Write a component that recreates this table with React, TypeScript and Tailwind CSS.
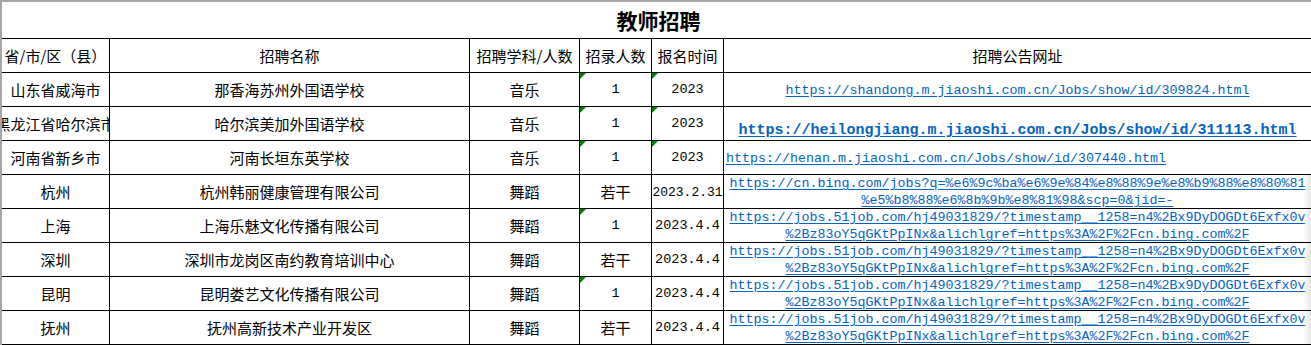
import React from "react";

const CJK = { fontFamily: '"Noto Sans CJK SC", "Liberation Sans", sans-serif' };
const MONO = { fontFamily: '"Liberation Mono", "Noto Sans CJK SC", monospace' };

function Tri() {
  return (
    <div className="absolute left-0 top-0 w-[6px] h-[6px] bg-[#008000] [clip-path:polygon(0_0,100%_0,0_100%)]" />
  );
}

function Cell({
  children,
  tri,
  mono,
  className = "",
}: {
  children: React.ReactNode;
  tri?: boolean;
  mono?: boolean;
  className?: string;
}) {
  return (
    <div
      className={`relative h-[34px] border-r border-b border-black overflow-hidden flex items-center justify-center whitespace-nowrap text-black ${className}`}
      style={mono ? MONO : CJK}
    >
      {tri && <Tri />}
      {children}
    </div>
  );
}

const J1 = "https://jobs.51job.com/hj49031829/?timestamp__1258=n4%2Bx9DyDOGDt6Exfx0v";
const J2 = "%2Bz83oY5qGKtPpINx&alichlgref=https%3A%2F%2Fcn.bing.com%2F";

type Row = {
  area: string;
  name: string;
  subj: string;
  num: string;
  numTri: boolean;
  date: string;
  dateTri: boolean;
  url: React.ReactNode;
};

function TwoLine({ a, b }: { a: string; b: string }) {
  return (
    <div className="relative h-[34px] border-b border-black overflow-hidden text-center whitespace-nowrap" style={MONO}>
      <div className="text-[13.33px] leading-[17px] text-[#0563c1] underline underline-offset-[2px]">{a}</div>
      <div className="text-[13.33px] leading-[17px] text-[#0563c1] underline underline-offset-[2px]">{b}</div>
      <div className="absolute right-0 top-0 bottom-0 w-[8px] bg-gradient-to-l from-[#e6e6e6] to-transparent" />
    </div>
  );
}

const rows: Row[] = [
  {
    area: "山东省威海市",
    name: "那香海苏州外国语学校",
    subj: "音乐",
    num: "1",
    numTri: true,
    date: "2023",
    dateTri: true,
    url: (
      <div className="h-[34px] border-b border-black overflow-hidden flex items-center justify-center whitespace-nowrap" style={MONO}>
        <span className="text-[13.33px] text-[#0563c1] underline underline-offset-[2px] pt-[2px]">
          https://shandong.m.jiaoshi.com.cn/Jobs/show/id/309824.html
        </span>
      </div>
    ),
  },
  {
    area: "黑龙江省哈尔滨市",
    name: "哈尔滨美加外国语学校",
    subj: "音乐",
    num: "1",
    numTri: true,
    date: "2023",
    dateTri: true,
    url: (
      <div className="h-[34px] border-b border-black overflow-hidden flex items-end justify-center whitespace-nowrap" style={MONO}>
        <span className="text-[15px] leading-[17px] font-bold text-[#0563c1] underline underline-offset-[2px] pb-[1px]">
          https://heilongjiang.m.jiaoshi.com.cn/Jobs/show/id/311113.html
        </span>
      </div>
    ),
  },
  {
    area: "河南省新乡市",
    name: "河南长垣东英学校",
    subj: "音乐",
    num: "1",
    numTri: true,
    date: "2023",
    dateTri: true,
    url: (
      <div className="h-[34px] border-b border-black overflow-hidden flex items-center justify-start pl-[2px] whitespace-nowrap" style={MONO}>
        <span className="text-[13.33px] text-[#0563c1] underline underline-offset-[2px] pt-[2px]">
          https://henan.m.jiaoshi.com.cn/Jobs/show/id/307440.html
        </span>
      </div>
    ),
  },
  {
    area: "杭州",
    name: "杭州韩丽健康管理有限公司",
    subj: "舞蹈",
    num: "若干",
    numTri: false,
    date: "2023.2.31",
    dateTri: false,
    url: (
      <TwoLine
        a="https://cn.bing.com/jobs?q=%e6%9c%ba%e6%9e%84%e8%88%9e%e8%b9%88%e8%80%81"
        b="%e5%b8%88%e6%8b%9b%e8%81%98&scp=0&jid=-"
      />
    ),
  },
  {
    area: "上海",
    name: "上海乐魅文化传播有限公司",
    subj: "舞蹈",
    num: "1",
    numTri: true,
    date: "2023.4.4",
    dateTri: false,
    url: <TwoLine a={J1} b={J2} />,
  },
  {
    area: "深圳",
    name: "深圳市龙岗区南约教育培训中心",
    subj: "舞蹈",
    num: "若干",
    numTri: false,
    date: "2023.4.4",
    dateTri: false,
    url: <TwoLine a={J1} b={J2} />,
  },
  {
    area: "昆明",
    name: "昆明娄艺文化传播有限公司",
    subj: "舞蹈",
    num: "1",
    numTri: true,
    date: "2023.4.4",
    dateTri: false,
    url: <TwoLine a={J1} b={J2} />,
  },
  {
    area: "抚州",
    name: "抚州高新技术产业开发区",
    subj: "舞蹈",
    num: "若干",
    numTri: false,
    date: "2023.4.4",
    dateTri: false,
    url: <TwoLine a={J1} b={J2} />,
  },
];

function isCJK(s: string) {
  return /[\u4e00-\u9fff]/.test(s);
}

export default function App() {
  return (
    <div className="w-[1311px] h-[345px] bg-white overflow-hidden border-l-2 border-[#a6a6a6]">
      <div className="h-[39px] border-t-2 border-[#a6a6a6] border-b border-b-black flex items-center justify-center">
        <span className="text-[21px] font-bold text-black leading-none pl-[4px]" style={CJK}>
          教师招聘
        </span>
      </div>
      <div className="grid grid-cols-[108px_360px_110px_72px_72px_1fr]">
        <Cell className="text-[15px] pt-[2px]">省/市/区（县）</Cell>
        <Cell className="text-[15px] pt-[2px]">招聘名称</Cell>
        <Cell className="text-[15px] pt-[2px]">招聘学科/人数</Cell>
        <Cell className="text-[15px] pt-[2px]">招录人数</Cell>
        <Cell className="text-[15px] pt-[2px]">报名时间</Cell>
        <div className="h-[34px] border-b border-black flex items-center justify-center pt-[2px] text-[15px] text-black" style={CJK}>
          招聘公告网址
        </div>
        {rows.map((r, i) => (
          <React.Fragment key={i}>
            <Cell className="text-[15px] pt-[2px]">{r.area}</Cell>
            <Cell className="text-[15px] pt-[2px]">{r.name}</Cell>
            <Cell className="text-[15px] pt-[2px]">{r.subj}</Cell>
            {isCJK(r.num) ? (
              <Cell tri={r.numTri} className="text-[15px] pt-[2px]">{r.num}</Cell>
            ) : (
              <Cell tri={r.numTri} mono className="text-[13.5px] pt-[2px]">{r.num}</Cell>
            )}
            <Cell tri={r.dateTri} mono className={r.date.length > 8 ? "text-[13px] pt-[2px]" : "text-[13.5px] pt-[2px]"}>{r.date}</Cell>
            {r.url}
          </React.Fragment>
        ))}
      </div>
    </div>
  );
}
